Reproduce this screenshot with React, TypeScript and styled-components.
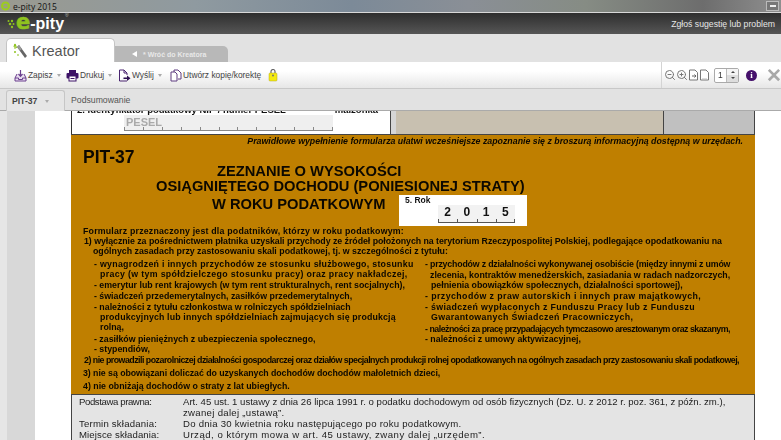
import React from 'react';
import styled, { createGlobalStyle } from 'styled-components';
import { ZoomIn, ZoomOut } from 'lucide-react';

const GlobalStyle = createGlobalStyle`
  html, body { margin: 0; padding: 0; background: #fff; }
  body { font-family: "Liberation Sans", Arial, sans-serif; }
`;

const Shell = styled.div`
  width: 781px;
  height: 440px;
  display: flex;
  flex-direction: column;
  overflow: hidden;
  filter: blur(0.4px);
`;

const TitleBar = styled.div`
  height: 12px;
  flex: none;
  display: flex;
  align-items: center;
  justify-content: space-between;
  background: linear-gradient(90deg, #9a9a90 0%, #8f9aa0 25%, #7c8a98 45%, #8a8f96 60%, #868c84 75%, #6d6d6d 90%, #8f8f8f 100%);
  border-bottom: 1px solid #d8d8d8;
`;

const TitleLeft = styled.div`
  display: flex;
  align-items: center;
  gap: 3px;
  font-size: 8.5px;
  font-family: "Open Sans", sans-serif;
  color: #111;
`;

const WindowButton = styled.div`
  width: 13px;
  height: 10px;
  margin-right: 2px;
  display: flex;
  align-items: center;
  justify-content: center;
  background: #777;
  border: 1px solid #bbb;
  box-sizing: border-box;
  &::after { content: ""; width: 6px; height: 2px; background: #eee; }
`;

const BrandBar = styled.div`
  height: 21px;
  flex: none;
  display: flex;
  align-items: center;
  justify-content: space-between;
  padding: 0 6px 0 7px;
  background: linear-gradient(#2e2e2e, #565656);
`;

const Logo = styled.div`
  display: flex;
  align-items: center;
  font-weight: 700;
  font-size: 16px;
  line-height: 1;
  color: #fff;
`;

const LogoE = styled.span`
  color: #8fc31f;
  font-family: "DejaVu Sans", sans-serif;
  font-size: 21px;
  line-height: 16px;
  margin-top: -3px;
  -webkit-text-stroke: 0.6px #8fc31f;
`;

const LogoMark = styled.sup`
  font-size: 5px;
  font-weight: 400;
  color: #bbb;
  align-self: flex-start;
  margin: -3px 0 0 1px;
`;

const ReportLink = styled.span`
  font-size: 8.7px;
  color: #e6e6e6;
`;

const TabStrip = styled.div`
  height: 28px;
  flex: none;
  display: flex;
  align-items: flex-end;
  padding-left: 6px;
  background: #e2e2e2;
`;

const MainTab = styled.div`
  width: 109px;
  height: 24px;
  box-sizing: border-box;
  display: flex;
  align-items: center;
  gap: 4px;
  padding-left: 6px;
  background: #fff;
  border: 1px solid #c4c4c4;
  border-bottom: none;
  border-radius: 5px 5px 0 0;
  font-size: 14.5px;
  color: #555;
`;

const BackTab = styled.div`
  width: 113px;
  height: 16px;
  box-sizing: border-box;
  display: flex;
  align-items: center;
  gap: 5px;
  padding-left: 17px;
  background: #b8b8b8;
  border-radius: 0 5px 0 0;
  font-size: 7px;
  font-weight: 700;
  color: #e8e8e8;
`;

const BackArrow = styled.span`
  width: 0;
  height: 0;
  margin-right: 1px;
  border-style: solid;
  border-width: 3px 5px 3px 0;
  border-color: transparent #fff transparent transparent;
`;

const Toolbar = styled.div`
  height: 27px;
  flex: none;
  box-sizing: border-box;
  display: flex;
  align-items: center;
  padding-left: 14px;
  background: linear-gradient(#fff 35%, #e6e6e6);
  border-bottom: 1px solid #c8c8c8;
`;

const ToolButton = styled.div<{ $w: number }>`
  width: ${(p) => p.$w}px;
  flex: none;
  display: flex;
  align-items: center;
  gap: 1px;
  font-size: 8.4px;
  color: #444;
  white-space: nowrap;
`;

const Caret = styled.span`
  width: 0;
  height: 0;
  margin-left: 3px;
  border-style: solid;
  border-width: 3px 2.5px 0 2.5px;
  border-color: #aaa transparent transparent transparent;
`;

const ToolEnd = styled.div`
  margin-left: auto;
  align-self: stretch;
  display: flex;
  align-items: center;
  border-left: 1px solid #d4d4d4;
  padding-left: 2px;
`;

const PageInput = styled.div`
  width: 25px;
  height: 15px;
  box-sizing: border-box;
  margin-left: 4px;
  display: flex;
  background: #fff;
  border: 1px solid #aaa;
  border-radius: 2px;
  font-size: 8.5px;
  line-height: 13px;
  padding-left: 3px;
  color: #333;
  justify-content: space-between;
`;

const Stepper = styled.div`
  width: 11px;
  display: flex;
  flex-direction: column;
  border-left: 1px solid #bbb;
`;

const StepHalf = styled.div<{ $down?: boolean }>`
  flex: 1;
  display: flex;
  align-items: center;
  justify-content: center;
  background: ${(p) => (p.$down ? '#ddd' : '#f4f4f4')};
  &::after {
    content: "";
    border-style: solid;
    border-width: ${(p) => (p.$down ? '2px 2px 0 2px' : '0 2px 2px 2px')};
    border-color: ${(p) => (p.$down ? '#444 transparent transparent' : 'transparent transparent #444')};
  }
`;

const InfoDot = styled.div`
  width: 11px;
  height: 11px;
  margin-left: 7px;
  border-radius: 50%;
  background: #45106b;
  color: #fff;
  font: 700 9px/11px "Liberation Serif", serif;
  text-align: center;
`;

const CloseMark = styled.div`
  margin: 0 -1px 0 9px;
  font-size: 19px;
  font-weight: 700;
  line-height: 1;
  color: #a8a8a8;
`;

const SubTabs = styled.div`
  height: 22px;
  flex: none;
  box-sizing: border-box;
  display: flex;
  align-items: flex-end;
  padding-left: 6px;
  background: #e2e2e2;
  border-bottom: 1px solid #aaa;
  position: relative;
  z-index: 1;
`;

const SubTabActive = styled.div`
  width: 59px;
  height: 21px;
  box-sizing: border-box;
  display: flex;
  align-items: center;
  gap: 5px;
  padding-left: 5px;
  margin-bottom: -1px;
  background: #e6e6e6;
  border: 1px solid #c6c6c6;
  border-bottom: none;
  border-radius: 3px 3px 0 0;
  font-size: 8.6px;
  font-weight: 700;
  color: #444;
`;

const SubTab = styled.div`
  align-self: center;
  padding-left: 6px;
  font-size: 8.7px;
  color: #555;
`;

const Body = styled.div`
  flex: 1;
  min-height: 0;
  display: flex;
  overflow: hidden;
`;

const Gutter = styled.div`
  width: 35px;
  flex: none;
  background: linear-gradient(90deg, #e6e6e6 7px, #d8d8d8 7px);
`;

const Sheet = styled.div`
  flex: 1;
  background: #fff;
  padding-left: 36px;
`;

const Form = styled.div`
  width: 684px;
`;

const IdRow = styled.div`
  height: 24px;
  display: flex;
  box-sizing: border-box;
  border-bottom: 1px solid #444;
`;

const IdCell = styled.div`
  width: 320px;
  flex: none;
  box-sizing: border-box;
  padding-left: 5px;
  background: #fff;
  border-left: 1px solid #333;
  border-right: 1px solid #444;
  overflow: hidden;
`;

const IdLabel = styled.div`
  height: 4px;
  display: flex;
  justify-content: space-between;
  padding-right: 12px;
  font-size: 9.5px;
  font-weight: 700;
  line-height: 4px;
  color: #111;
  white-space: nowrap;
  & > span { position: relative; top: -3px; }
`;

const CombField = styled.div`
  width: 209px;
  height: 16px;
  margin: 0 0 0 47px;
  box-sizing: border-box;
  position: relative;
  display: flex;
  background: #efefef;
  border-bottom: 1px solid #888;
`;

const CombCell = styled.div`
  flex: 1;
  border-left: 1px solid #888;
  height: 3px;
  align-self: flex-end;
  &:last-child { border-right: 1px solid #888; }
`;

const CombHint = styled.span`
  position: absolute;
  left: 2px;
  top: 1px;
  font-size: 11px;
  font-weight: 700;
  color: #aaa;
`;

const ShadedCell = styled.div<{ $w: number; $bg: string; $inset?: boolean }>`
  width: ${(p) => p.$w}px;
  flex: none;
  box-sizing: border-box;
  background: ${(p) => p.$bg};
  border-left: ${(p) => (p.$inset ? '5px solid #d6d6d6' : 'none')};
  border-right: 1px solid #444;
`;

const Orange = styled.div`
  height: 259px;
  box-sizing: border-box;
  background: #bf7f00;
  color: #0c0800;
  font-weight: 700;
  padding-top: 1px;
`;

const Note = styled.div`
  text-align: right;
  padding-right: 12px;
  font-size: 8.8px;
  font-style: italic;
  line-height: 11px;
`;

const PitTitle = styled.div`
  margin: 1px 0 0 12px;
  font-size: 17.5px;
  line-height: 18px;
`;

const Heading = styled.div<{ $left: number; $top: number }>`
  margin: ${(p) => p.$top}px 0 0 ${(p) => p.$left}px;
  font-size: 14.7px;
  line-height: 15px;
  white-space: nowrap;
`;

const LastHeading = styled.div`
  display: flex;
  align-items: flex-start;
  margin: 1px 0 0 141px;
  height: 31px;
`;

const HeadingText = styled.div`
  font-size: 14.7px;
  line-height: 15px;
  width: 187px;
  flex: none;
  padding-top: 2px;
  white-space: nowrap;
`;

const YearBox = styled.div`
  width: 128px;
  height: 31px;
  flex: none;
  box-sizing: border-box;
  padding: 1px 12px 0 6px;
  background: #fff;
  color: #111;
`;

const YearLabel = styled.div`
  font-size: 8.5px;
  line-height: 9px;
`;

const YearComb = styled.div`
  width: 77px;
  height: 17px;
  margin: 0 0 0 33px;
  display: flex;
  background: #f2f2f2;
  border-bottom: 1px solid #555;
`;

const YearDigit = styled.div`
  flex: 1;
  text-align: center;
  font-size: 12px;
  line-height: 15px;
  background: linear-gradient(#555, #555) left bottom / 1px 3px no-repeat;
  &:last-child {
    background: linear-gradient(#555, #555) left bottom / 1px 3px no-repeat,
      linear-gradient(#555, #555) right bottom / 1px 3px no-repeat;
  }
`;

const Lines = styled.div`
  font-size: 8.8px;
`;

const Line = styled.div<{ $top?: number; $left: number; $ls?: number }>`
  margin: ${(p) => p.$top || 0}px 0 0 ${(p) => p.$left}px;
  line-height: 10px;
  white-space: nowrap;
  letter-spacing: ${(p) => p.$ls || 0}px;
`;

const Columns = styled.div`
  display: grid;
  grid-template-columns: 342px 1fr;
`;

const Legal = styled.div`
  height: 50px;
  box-sizing: border-box;
  padding: 2px 0 0 7px;
  background: #e4e4e4;
  border: 1px solid #444;
  font-size: 9.6px;
  color: #1c1c1c;
`;

const LegalRow = styled.div<{ $top?: number }>`
  display: grid;
  grid-template-columns: 104px 1fr;
  margin-top: ${(p) => p.$top || 0}px;
  line-height: 10.5px;
`;

const LegalText = styled.span<{ $ls?: number }>`
  letter-spacing: ${(p) => p.$ls || 0}px;
  white-space: nowrap;
`;

const MainIconSvg = () => (
  <svg width="15" height="16" viewBox="0 0 15 16">
    <path d="M2 1l1.5 4M2 1l-1 3M1 5h2" stroke="#8fc31f" strokeWidth="1.2" fill="none" />
    <path d="M6 2l8 11-2 2-8-11z" fill="#666" />
    <path d="M6 2l3 4-2 1.500-3-3.500z" fill="#9a9a9a" />
    <circle cx="2" cy="9" r="1" fill="#8fc31f" />
    <circle cx="5" cy="12" r="1" fill="#b5d56a" />
  </svg>
);

const SaveIcon = () => (
  <svg width="13" height="13" viewBox="0 0 13 13">
    <path d="M3 5L1 9v3h11V9l-2-4" fill="#e9dff0" stroke="#6b3f8e" />
    <path d="M1 9h3.500v1.500h4V9H12" fill="none" stroke="#6b3f8e" />
    <path d="M6.500 1v6M4.500 5l2 2.300 2-2.300" fill="none" stroke="#6b3f8e" strokeWidth="1.200" />
  </svg>
);

const PrintIcon = () => (
  <svg width="13" height="13" viewBox="0 0 13 13">
    <rect x="3" y="1" width="7" height="3" fill="#3d1266" />
    <rect x="0.500" y="4" width="12" height="5.500" rx="1" fill="#3d1266" />
    <rect x="3" y="7" width="7" height="5" fill="#fff" stroke="#3d1266" />
    <rect x="4.500" y="9" width="4" height="1" fill="#3d1266" />
  </svg>
);

const SendIcon = () => (
  <svg width="13" height="13" viewBox="0 0 13 13">
    <path d="M1.500 12V1H6l3 3v2M9 12H1.500" fill="#fff" stroke="#4a2570" />
    <path d="M6 1v3h3" fill="none" stroke="#4a2570" />
    <path d="M5.500 8.500H9V6.500l3.500 2.800L9 12v-2H5.500z" fill="#2d1050" />
  </svg>
);

const CopyIcon = () => (
  <svg width="12" height="13" viewBox="0 0 12 13">
    <path d="M4 3V1h4l3 3v6H8" fill="#fff" stroke="#5f3d80" />
    <path d="M1 3h4l2 2v7H1z" fill="#fff" stroke="#5f3d80" />
  </svg>
);

const LockIcon = () => (
  <svg width="10" height="13" viewBox="0 0 10 13">
    <path d="M3 4V2.500a2 2 0 0 1 4 0V4" fill="none" stroke="#666" strokeWidth="1.200" />
    <rect x="1" y="4" width="8" height="8" rx="1" fill="#f4ea10" stroke="#b4a820" strokeWidth="0.500" />
    <circle cx="5" cy="6.500" r="1" fill="#777" />
  </svg>
);

const PageIcon = ({ arrow }: { arrow?: boolean }) => (
  <svg width="11" height="12" viewBox="0 0 11 12">
    <path d="M1.500 11V1H7l2.500 2.500V11z" fill="#fff" stroke="#777" />
    {arrow ? <path d="M4 7h4M6.500 5.500L8 7 6.500 8.500" fill="none" stroke="#666" /> : <path d="M3 10h5" stroke="#bbb" />}
  </svg>
);

const BackEIcon = () => (
  <svg width="10" height="10" viewBox="0 0 10 10">
    <circle cx="5.500" cy="5" r="3.500" fill="none" stroke="#9ccc1e" strokeWidth="2" />
    <path d="M3 5h5" stroke="#9ccc1e" />
  </svg>
);

const LogoDots = () => (
  <svg width="9" height="10" viewBox="0 0 9 10">
    <circle cx="1.500" cy="2" r="1" fill="#8fc31f" />
    <circle cx="5" cy="2" r="1.200" fill="#8fc31f" />
    <circle cx="3" cy="5" r="1.300" fill="#8fc31f" />
    <circle cx="6.500" cy="5" r="1" fill="#8fc31f" />
    <circle cx="5" cy="8" r="1.200" fill="#8fc31f" />
  </svg>
);

export default function App() {
  return (
    <>
      <GlobalStyle />
      <Shell>
        <TitleBar>
          <TitleLeft>
            <BackEIcon />
            e-pity 2015
          </TitleLeft>
          <WindowButton />
        </TitleBar>
        <BrandBar>
          <Logo>
            <LogoDots />
            <LogoE>e</LogoE>-pity
            <LogoMark>®</LogoMark>
          </Logo>
          <ReportLink>Zgłoś sugestię lub problem</ReportLink>
        </BrandBar>
        <TabStrip>
          <MainTab>
            <MainIconSvg />
            Kreator
          </MainTab>
          <BackTab>
            <BackArrow />* Wróć do Kreatora
          </BackTab>
        </TabStrip>
        <Toolbar>
          <ToolButton $w={52}><SaveIcon />Zapisz<Caret /></ToolButton>
          <ToolButton $w={52}><PrintIcon />Drukuj<Caret /></ToolButton>
          <ToolButton $w={52}><SendIcon />Wyślij<Caret /></ToolButton>
          <ToolButton $w={98}><CopyIcon />Utwórz kopię/korektę</ToolButton>
          <LockIcon />
          <ToolEnd>
            <ZoomOut size={12} color="#777" />
            <ZoomIn size={12} color="#777" />
            <PageIcon arrow />
            <PageIcon />
            <PageInput>
              1
              <Stepper><StepHalf /><StepHalf $down /></Stepper>
            </PageInput>
            <InfoDot>i</InfoDot>
            <CloseMark>✕</CloseMark>
          </ToolEnd>
        </Toolbar>
        <SubTabs>
          <SubTabActive>PIT-37<Caret /></SubTabActive>
          <SubTab>Podsumowanie</SubTab>
        </SubTabs>
        <Body>
          <Gutter />
          <Sheet>
            <Form>
              <IdRow>
                <IdCell>
                  <IdLabel>
                    <span>2. Identyfikator podatkowy NIP / numer PESEL</span>
                    <span>małżonka</span>
                  </IdLabel>
                  <CombField>
                    <CombHint>PESEL</CombHint>
                    {Array.from({ length: 11 }).map((_, i) => <CombCell key={i} />)}
                  </CombField>
                </IdCell>
                <ShadedCell $w={273} $bg="#c8c0b0" $inset />
                <ShadedCell $w={91} $bg="#c0c0c0" />
              </IdRow>
              <Orange>
                <Note>Prawidłowe wypełnienie formularza ułatwi wcześniejsze zapoznanie się z broszurą informacyjną dostępną w urzędach.</Note>
                <PitTitle>PIT-37</PitTitle>
                <Heading $left={146} $top={-2}>ZEZNANIE O WYSOKOŚCI</Heading>
                <Heading $left={85} $top={0}>OSIĄGNIĘTEGO DOCHODU (PONIESIONEJ STRATY)</Heading>
                <LastHeading>
                  <HeadingText>W ROKU PODATKOWYM</HeadingText>
                  <YearBox>
                    <YearLabel>5. Rok</YearLabel>
                    <YearComb>
                      {['2', '0', '1', '5'].map((d) => <YearDigit key={d}>{d}</YearDigit>)}
                    </YearComb>
                  </YearBox>
                </LastHeading>
                <Lines>
                  <Line $left={12} $ls={0.2}>Formularz przeznaczony jest dla podatników, którzy w roku podatkowym:</Line>
                  <Line $left={13} $ls={-0.04}>1) wyłącznie za pośrednictwem płatnika uzyskali przychody ze źródeł położonych na terytorium Rzeczypospolitej Polskiej, podlegające opodatkowaniu na</Line>
                  <Line $left={22}>ogólnych zasadach przy zastosowaniu skali podatkowej, tj. w szczególności z tytułu:</Line>
                  <Columns>
                    <div>
                      <Line $top={3} $left={23} $ls={0.28}>- wynagrodzeń i innych przychodów ze stosunku służbowego, stosunku</Line>
                      <Line $left={29} $ls={0.34}>pracy (w tym spółdzielczego stosunku pracy) oraz pracy nakładczej,</Line>
                      <Line $top={1} $left={23}>- emerytur lub rent krajowych (w tym rent strukturalnych, rent socjalnych),</Line>
                      <Line $top={1} $left={23}>- świadczeń przedemerytalnych, zasiłków przedemerytalnych,</Line>
                      <Line $top={1} $left={23}>- należności z tytułu członkostwa w rolniczych spółdzielniach</Line>
                      <Line $left={29} $ls={0.15}>produkcyjnych lub innych spółdzielniach zajmujących się produkcją</Line>
                      <Line $left={29}>rolną,</Line>
                      <Line $top={2} $left={23}>- zasiłków pieniężnych z ubezpieczenia społecznego,</Line>
                      <Line $left={23}>- stypendiów,</Line>
                    </div>
                    <div>
                      <Line $top={3} $left={12} $ls={-0.19}>- przychodów z działalności wykonywanej osobiście (między innymi z umów</Line>
                      <Line $top={1} $left={17}>zlecenia, kontraktów menedżerskich, zasiadania w radach nadzorczych,</Line>
                      <Line $left={18}>pełnienia obowiązków społecznych, działalności sportowej),</Line>
                      <Line $top={1} $left={12} $ls={0.42}>- przychodów z praw autorskich i innych praw majątkowych,</Line>
                      <Line $top={1} $left={12} $ls={0.35}>- świadczeń wypłaconych z Funduszu Pracy lub z Funduszu</Line>
                      <Line $left={18} $ls={0.35}>Gwarantowanych Świadczeń Pracowniczych,</Line>
                      <Line $top={2} $left={12} $ls={-0.49}>- należności za pracę przypadających tymczasowo aresztowanym oraz skazanym,</Line>
                      <Line $left={12}>- należności z umowy aktywizacyjnej,</Line>
                    </div>
                  </Columns>
                  <Line $top={1} $left={13} $ls={-0.5}>2) nie prowadzili pozarolniczej działalności gospodarczej oraz działów specjalnych produkcji rolnej opodatkowanych na ogólnych zasadach przy zastosowaniu skali podatkowej,</Line>
                  <Line $top={3} $left={12} $ls={-0.05}>3) nie są obowiązani doliczać do uzyskanych dochodów dochodów małoletnich dzieci,</Line>
                  <Line $top={3} $left={12}>4) nie obniżają dochodów o straty z lat ubiegłych.</Line>
                </Lines>
              </Orange>
              <Legal>
                <LegalRow>
                  <LegalText $ls={-0.4}>Podstawa prawna:</LegalText>
                  <LegalText>Art. 45 ust. 1 ustawy z dnia 26 lipca 1991 r. o podatku dochodowym od osób fizycznych (Dz. U. z 2012 r. poz. 361, z późn. zm.),</LegalText>
                </LegalRow>
                <LegalRow>
                  <span />
                  <LegalText $ls={0.3}>zwanej dalej „ustawą”.</LegalText>
                </LegalRow>
                <LegalRow $top={1}>
                  <LegalText $ls={0.2}>Termin składania:</LegalText>
                  <LegalText $ls={0.25}>Do dnia 30 kwietnia roku następującego po roku podatkowym.</LegalText>
                </LegalRow>
                <LegalRow>
                  <LegalText $ls={0.1}>Miejsce składania:</LegalText>
                  <LegalText $ls={0.5}>Urząd, o którym mowa w art. 45 ustawy, zwany dalej „urzędem”.</LegalText>
                </LegalRow>
              </Legal>
            </Form>
          </Sheet>
        </Body>
      </Shell>
    </>
  );
}
